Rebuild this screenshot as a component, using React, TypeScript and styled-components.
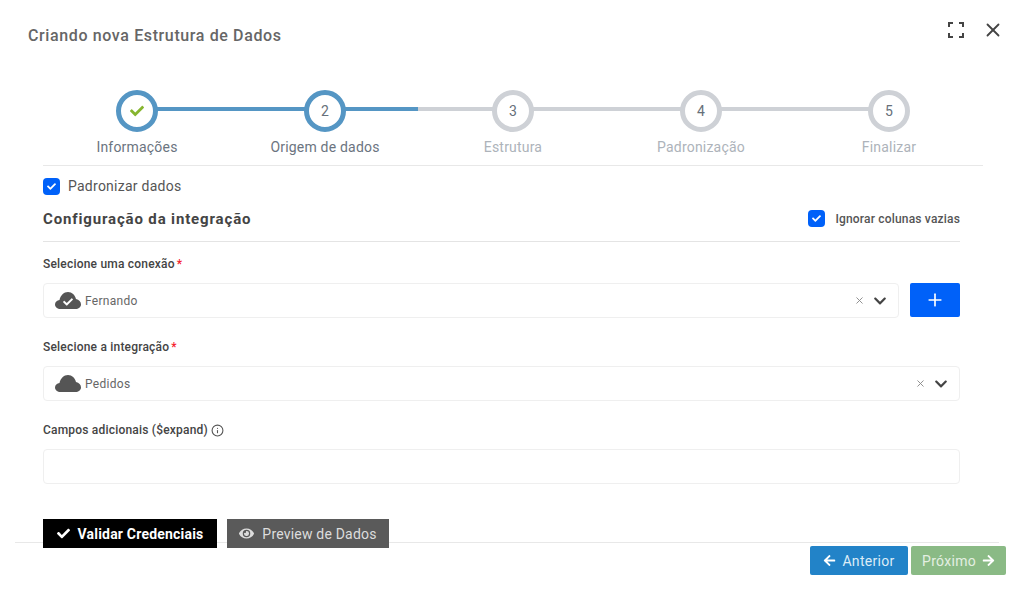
import React from "react";
import styled, { createGlobalStyle } from "styled-components";
import { FaArrowLeft, FaArrowRight, FaCheck, FaChevronDown, FaEye } from "react-icons/fa";
import { Info, Plus, X } from "lucide-react";

const GlobalStyle = createGlobalStyle`
  html, body {
    margin: 0;
    background: #fff;
    font-family: Roboto, "Liberation Sans", sans-serif;
    color: #555;
  }
  * { box-sizing: border-box; }
`;

const Page = styled.div`
  width: 1024px;
  height: 593px;
  overflow: hidden;
  display: flex;
  flex-direction: column;
`;

const Header = styled.header`
  height: 90px;
  display: flex;
  justify-content: space-between;
  align-items: flex-start;
  padding: 20px 20px 0 28px;
`;

const Title = styled.h1`
  margin: 0;
  font-size: 16px;
  line-height: 32px;
  font-weight: 500;
  letter-spacing: 0.62px;
  color: #666;
`;

const HeaderActions = styled.div`
  display: flex;
  align-items: center;
  gap: 18px;
  color: #444;
  height: 20px;
`;

const Stepper = styled.ol`
  list-style: none;
  margin: 0 41px 0 43px;
  padding: 0;
  display: grid;
  grid-template-columns: repeat(5, 1fr);
  height: 76px;
  border-bottom: 1px solid #e8e8e8;
`;

const Step = styled.li`
  position: relative;
  display: flex;
  flex-direction: column;
  align-items: center;
`;

const Connector = styled.span<{ $fill: number }>`
  position: absolute;
  top: 17px;
  left: 50%;
  width: 188px;
  height: 4px;
  background: linear-gradient(
    to right,
    #5596c4 ${(p) => p.$fill}%,
    #ced1d6 ${(p) => p.$fill}%
  );
`;

const Circle = styled.span<{ $active: boolean }>`
  position: relative;
  width: 42px;
  height: 42px;
  border-radius: 50%;
  background: #fff;
  border: 5px solid ${(p) => (p.$active ? "#5596c4" : "#ced1d6")};
  display: flex;
  align-items: center;
  justify-content: center;
  font-size: 14px;
  color: #66707a;
`;

const StepLabel = styled.span<{ $active: boolean }>`
  margin-top: 5px;
  font-size: 14px;
  line-height: 20px;
  letter-spacing: 0.2px;
  color: ${(p) => (p.$active ? "#6b7480" : "#adb3ba")};
`;

const Content = styled.main`
  width: 917px;
  margin-left: 43px;
  display: flex;
  flex-direction: column;
`;

const CheckRow = styled.label<{ $gap: number }>`
  display: flex;
  align-items: center;
  gap: ${(p) => p.$gap}px;
`;

const CheckBox = styled.span`
  width: 17px;
  height: 17px;
  border-radius: 4px;
  background: #0061f9;
  color: #fff;
  display: flex;
  align-items: center;
  justify-content: center;
`;

const PadronizarRow = styled.div`
  margin-top: 12px;
  height: 17px;
  font-size: 14px;
  line-height: 15px;
  letter-spacing: 0.25px;
  color: #555;
`;

const SectionHead = styled.div`
  margin-top: 7px;
  height: 40px;
  padding-bottom: 6px;
  display: flex;
  align-items: center;
  justify-content: space-between;
  border-bottom: 1px solid #e4e4e4;
`;

const SectionTitle = styled.h2`
  margin: 0;
  font-size: 15px;
  font-weight: 700;
  letter-spacing: 0.85px;
  color: #444;
`;

const IgnoreText = styled.span`
  font-size: 12px;
  font-weight: 500;
  letter-spacing: 0.18px;
  color: #555;
`;

const Field = styled.div`
  display: flex;
  flex-direction: column;
  height: 83px;
`;

const FieldLabel = styled.label`
  height: 41px;
  padding-top: 14px;
  font-size: 12px;
  line-height: 16px;
  font-weight: 500;
  letter-spacing: 0.2px;
  color: #444;
  display: flex;
  gap: 2px;
`;

const Star = styled.span`
  color: #f5222d;
`;

const InfoIcon = styled.span`
  margin-left: 1px;
  color: #555;
  display: inline-flex;
  align-items: center;
  height: 16px;
`;

const ControlRow = styled.div`
  display: flex;
  gap: 11px;
`;

const Select = styled.div`
  flex: 1;
  height: 35px;
  border: 1px solid #efefef;
  border-radius: 4px;
  display: flex;
  align-items: center;
  padding: 0 11px;
  font-size: 12px;
  letter-spacing: 0.3px;
  color: #666;
`;

const SelectCloud = styled.span`
  position: relative;
  width: 26px;
  height: 17px;
  margin-right: 4px;
  color: #555;
  display: flex;
`;

const CloudCheck = styled.span`
  position: absolute;
  inset: 0;
  color: #fff;
  display: flex;
  align-items: center;
  justify-content: center;
  padding-top: 2px;
`;

const SelectValue = styled.span`
  flex: 1;
`;

const ClearIcon = styled.span`
  color: #888;
  display: flex;
  margin-right: 8px;
`;

const Chevron = styled.span`
  color: #444;
  display: flex;
`;

const AddButton = styled.button`
  width: 50px;
  height: 34px;
  border: none;
  border-radius: 2px;
  background: #0061f9;
  color: #fff;
  display: flex;
  align-items: center;
  justify-content: center;
  padding: 0;
`;

const TextInput = styled.div`
  height: 35px;
  border: 1px solid #efefef;
  border-radius: 4px;
`;

const ActionRow = styled.div`
  position: relative;
  margin-top: 28px;
  height: 29px;
  display: flex;
  gap: 10px;
`;

const ActionButton = styled.button<{ $bg: string; $width: number; $weight: number }>`
  width: ${(p) => p.$width}px;
  height: 29px;
  border: none;
  padding: 0;
  background: ${(p) => p.$bg};
  color: ${(p) => (p.$weight > 400 ? "#fff" : "#ddd")};
  font-family: inherit;
  font-size: 14px;
  font-weight: ${(p) => p.$weight};
  letter-spacing: 0.2px;
  display: flex;
  align-items: center;
  justify-content: center;
  gap: 8px;
`;

const Footer = styled.footer`
  margin: -6px 25px 0 15px;
  height: 40px;
  border-top: 1px solid #e8e8e8;
  padding-top: 3px;
  display: flex;
  justify-content: flex-end;
`;

const NavWrap = styled.div`
  display: flex;
  gap: 3px;
  margin-right: -7px;
`;

const NavButton = styled.button<{ $bg: string; $color: string; $width: number }>`
  width: ${(p) => p.$width}px;
  height: 29px;
  border: none;
  border-radius: 2px;
  padding: 0;
  background: ${(p) => p.$bg};
  color: ${(p) => p.$color};
  font-family: inherit;
  font-size: 14px;
  letter-spacing: 0.3px;
  display: flex;
  align-items: center;
  justify-content: center;
  gap: 6px;
`;

const steps = [
  { label: "Informações", active: true, fill: 100 },
  { label: "Origem de dados", active: true, fill: 49.5 },
  { label: "Estrutura", active: false, fill: 0 },
  { label: "Padronização", active: false, fill: 0 },
  { label: "Finalizar", active: false, fill: 0 },
];

const ExpandIcon = () => (
  <svg width="16" height="16" viewBox="0 0 16 16" fill="none" stroke="currentColor" strokeWidth="2">
    <path d="M1 5V1h4M11 1h4v4M15 11v4h-4M5 15H1v-4" />
  </svg>
);

const CloudIcon = () => (
  <svg width="26" height="17" viewBox="0 0 26 17" fill="currentColor">
    <path d="M5.5 17C2.5 17 0 15 0 12.5 0 10 2 8.2 4.5 8 5.5 3.5 8.8 0 13 0c4 0 7 3 8 7 3 .5 5 2.8 5 5.5 0 2.5-2.5 4.5-5.5 4.5z" />
  </svg>
);

const Tick = ({ size }: { size: number }) => <FaCheck size={size} />;

export default function App() {
  return (
    <Page>
      <GlobalStyle />
      <Header>
        <Title>Criando nova Estrutura de Dados</Title>
        <HeaderActions>
          <ExpandIcon />
          <X size={22} strokeWidth={2} />
        </HeaderActions>
      </Header>

      <Stepper>
        {steps.map((step, i) => (
          <Step key={step.label}>
            {i < steps.length - 1 && <Connector $fill={step.fill} />}
            <Circle $active={step.active}>
              {i === 0 ? <FaCheck size={14} color="#86b52f" /> : i + 1}
            </Circle>
            <StepLabel $active={step.active}>{step.label}</StepLabel>
          </Step>
        ))}
      </Stepper>

      <Content>
        <PadronizarRow>
          <CheckRow $gap={8}>
            <CheckBox>
              <Tick size={9} />
            </CheckBox>
            Padronizar dados
          </CheckRow>
        </PadronizarRow>

        <SectionHead>
          <SectionTitle>Configuração da integração</SectionTitle>
          <CheckRow $gap={10}>
            <CheckBox>
              <Tick size={9} />
            </CheckBox>
            <IgnoreText>Ignorar colunas vazias</IgnoreText>
          </CheckRow>
        </SectionHead>

        <Field>
          <FieldLabel>
            Selecione uma conexão<Star>*</Star>
          </FieldLabel>
          <ControlRow>
            <Select>
              <SelectCloud>
                <CloudIcon />
                <CloudCheck>
                  <Tick size={10} />
                </CloudCheck>
              </SelectCloud>
              <SelectValue>Fernando</SelectValue>
              <ClearIcon>
                <X size={11} />
              </ClearIcon>
              <Chevron>
                <FaChevronDown size={14} />
              </Chevron>
            </Select>
            <AddButton>
              <Plus size={20} strokeWidth={2} />
            </AddButton>
          </ControlRow>
        </Field>

        <Field>
          <FieldLabel>
            Selecione a integração<Star>*</Star>
          </FieldLabel>
          <ControlRow>
            <Select>
              <SelectCloud>
                <CloudIcon />
              </SelectCloud>
              <SelectValue>Pedidos</SelectValue>
              <ClearIcon>
                <X size={11} />
              </ClearIcon>
              <Chevron>
                <FaChevronDown size={14} />
              </Chevron>
            </Select>
          </ControlRow>
        </Field>

        <Field>
          <FieldLabel>
            Campos adicionais ($expand)
            <InfoIcon>
              <Info size={13} />
            </InfoIcon>
          </FieldLabel>
          <TextInput />
        </Field>

        <ActionRow>
          <ActionButton $bg="#000" $width={174} $weight={700}>
            <FaCheck size={13} />
            Validar Credenciais
          </ActionButton>
          <ActionButton $bg="#5a5a5a" $width={162} $weight={400}>
            <FaEye size={15} />
            Preview de Dados
          </ActionButton>
        </ActionRow>
      </Content>

      <Footer>
        <NavWrap>
          <NavButton $bg="#2283c8" $color="#dcecf7" $width={98}>
            <FaArrowLeft size={13} color="#fff" />
            Anterior
          </NavButton>
          <NavButton $bg="#8aba85" $color="#e4efe2" $width={95}>
            Próximo
            <FaArrowRight size={13} color="#fff" />
          </NavButton>
        </NavWrap>
      </Footer>
    </Page>
  );
}
